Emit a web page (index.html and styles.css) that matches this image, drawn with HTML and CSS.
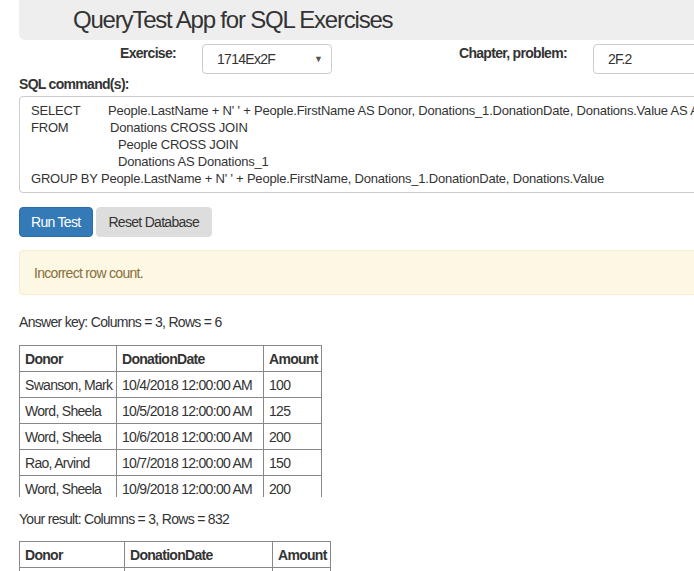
FILE: index.html
```html
<!DOCTYPE html>
<html>
<head>
<meta charset="utf-8">
<link rel="stylesheet" href="styles.css">
</head>
<body>
<div class="page">
  <div class="jumbo"><h1 class="title">QueryTest App for SQL Exercises</h1></div>
  <div class="form-row">
    <label class="lbl lbl-ex">Exercise:</label>
    <div class="select"><span>1714Ex2F</span><span class="caret">▼</span></div>
    <label class="lbl lbl-ch">Chapter, problem:</label>
    <div class="input">2F.2</div>
  </div>
  <div class="sql-label">SQL command(s):</div>
  <div class="textarea">
    <div class="line"><span class="kw kw1">SELECT</span>People.LastName + N' ' + People.FirstName AS Donor, Donations_1.DonationDate, Donations.Value AS Amount</div>
    <div class="line"><span class="kw kw2">FROM</span>Donations CROSS JOIN</div>
    <div class="line indent">People CROSS JOIN</div>
    <div class="line indent">Donations AS Donations_1</div>
    <div class="line">GROUP BY People.LastName + N' ' + People.FirstName, Donations_1.DonationDate, Donations.Value</div>
  </div>
  <div class="buttons">
    <button class="btn btn-primary">Run Test</button>
    <button class="btn btn-default">Reset Database</button>
  </div>
  <div class="alert">Incorrect row count.</div>
  <p class="info">Answer key: Columns = 3, Rows = 6</p>
  <div class="scroll">
    <table class="grid t1">
      <colgroup><col class="c1"><col class="c2"><col class="c3"></colgroup>
      <tr><th>Donor</th><th>DonationDate</th><th>Amount</th></tr>
      <tr><td>Swanson, Mark</td><td>10/4/2018 12:00:00 AM</td><td>100</td></tr>
      <tr><td>Word, Sheela</td><td>10/5/2018 12:00:00 AM</td><td>125</td></tr>
      <tr><td>Word, Sheela</td><td>10/6/2018 12:00:00 AM</td><td>200</td></tr>
      <tr><td>Rao, Arvind</td><td>10/7/2018 12:00:00 AM</td><td>150</td></tr>
      <tr><td>Word, Sheela</td><td>10/9/2018 12:00:00 AM</td><td>200</td></tr>
    </table>
  </div>
  <p class="info info2">Your result: Columns = 3, Rows = 832</p>
  <div class="scroll scroll2">
    <table class="grid t2">
      <colgroup><col class="c1"><col class="c2"><col class="c3"></colgroup>
      <tr><th>Donor</th><th>DonationDate</th><th>Amount</th></tr>
      <tr><td>&nbsp;</td><td>&nbsp;</td><td>&nbsp;</td></tr>
    </table>
  </div>
</div>
</body>
</html>
```
FILE: styles.css
```css
html, body {
  margin: 0;
  padding: 0;
  overflow: hidden;
  background: #fff;
}
body {
  font-family: "Liberation Sans", Arial, sans-serif;
  font-size: 14px;
  letter-spacing: -0.7px;
  color: #333;
}
.page {
  width: 800px;
  padding-left: 19px;
}
.jumbo {
  background: #eee;
  height: 40px;
  border-radius: 0 0 0 6px;
  padding-left: 54px;
  display: flex;
  align-items: center;
}
.title {
  margin: 0;
  font-size: 24px;
  font-weight: normal;
  letter-spacing: -1.2px;
  color: #333;
  line-height: 1;
}
.form-row {
  display: flex;
  align-items: flex-start;
  margin-top: 4px;
  height: 30px;
}
.lbl {
  font-weight: bold;
  padding-top: 1px;
}
.lbl-ex {
  margin-left: 101px;
  width: 82px;
}
.select {
  width: 106px;
  height: 28px;
  border: 1px solid #ccc;
  border-radius: 4px;
  display: flex;
  align-items: center;
  justify-content: space-between;
  padding: 0 8px 0 14px;
}
.caret {
  font-size: 9px;
  color: #555;
  letter-spacing: 0;
}
.lbl-ch {
  margin-left: 127px;
  width: 134px;
}
.input {
  width: 200px;
  height: 28px;
  border: 1px solid #ccc;
  border-radius: 4px;
  padding-left: 14px;
  line-height: 28px;
}
.sql-label {
  font-weight: bold;
  margin-top: 2px;
  line-height: 16px;
}
.textarea {
  margin-top: 4px;
  border: 1px solid #ccc;
  border-radius: 4px 0 0 4px;
  padding: 5px 11px;
  box-sizing: border-box;
  height: 97px;
  white-space: nowrap;
  overflow: hidden;
  font-size: 13px;
  letter-spacing: -0.2px;
  line-height: 17px;
}
.kw {
  display: inline-block;
}
.kw1 { width: 77px; }
.kw2 { width: 79px; }
.indent { padding-left: 87px; }
.buttons {
  display: flex;
  gap: 3px;
  margin-top: 14px;
}
.btn {
  font-family: inherit;
  font-size: 14px;
  letter-spacing: -0.7px;
  height: 30px;
  padding: 0 12px 0 11px;
  border-radius: 4px;
  border: 1px solid transparent;
  cursor: pointer;
}
.btn-primary {
  background: #337ab7;
  border-color: #2e6da4;
  color: #fff;
}
.btn-default {
  background: #ddd;
  border-color: #ddd;
  color: #333;
}
.alert {
  margin-top: 13px;
  background: #fcf8e3;
  border: 1px solid #faebcc;
  border-radius: 4px 0 0 4px;
  color: #8a6d3b;
  height: 45px;
  box-sizing: border-box;
  padding-left: 14px;
  display: flex;
  align-items: center;
}
.info {
  margin: 19px 0 0;
  line-height: 17px;
}
.info2 {
  margin-top: 14px;
}
.scroll {
  margin-top: 14px;
  height: 152px;
  overflow: hidden;
}
.scroll2 {
  margin-top: 13px;
}
.grid {
  border-collapse: collapse;
  table-layout: fixed;
}
.t1 { width: 302px; }
.t2 { width: 311px; }
.t1 .c1 { width: 97px; }
.t1 .c2 { width: 147px; }
.t1 .c3 { width: 58px; }
.t2 .c1 { width: 105px; }
.t2 .c2 { width: 148px; }
.t2 .c3 { width: 58px; }
.grid th, .grid td {
  border: 1px solid #888;
  height: 25px;
  padding: 0 4px 0 5px;
  text-align: left;
  white-space: nowrap;
  line-height: 16px;
  overflow: hidden;
}
.grid th { font-weight: bold; }
```
